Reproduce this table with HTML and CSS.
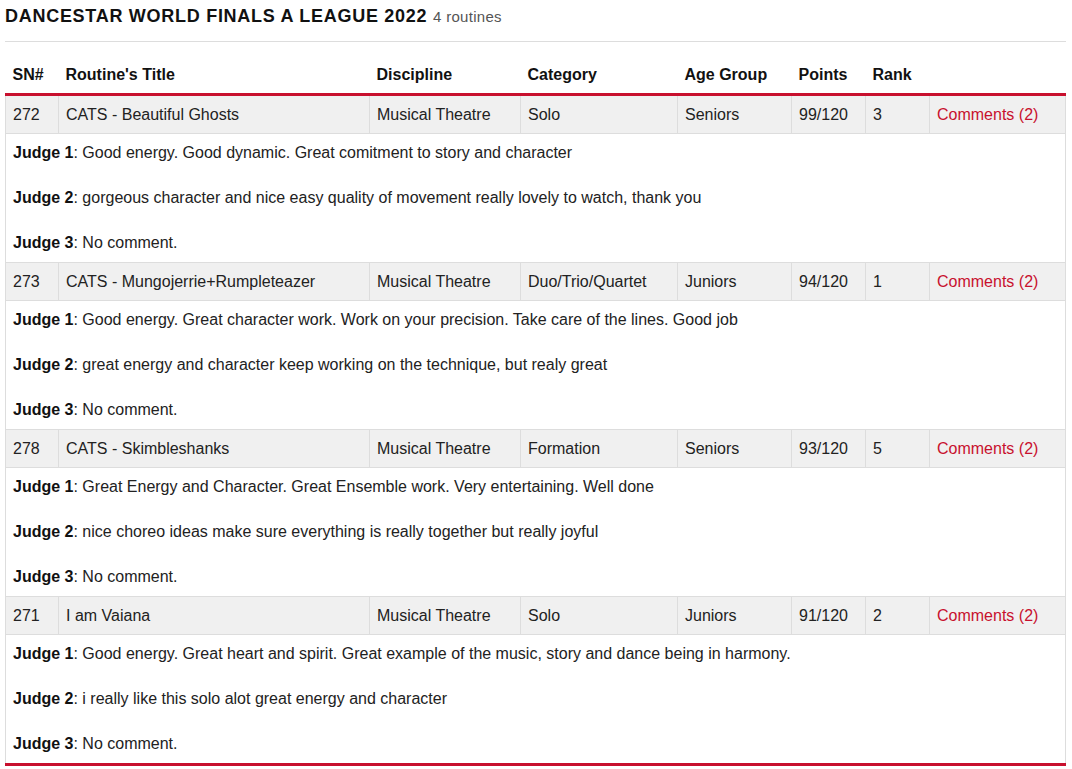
FILE: index.html
```html
<!DOCTYPE html>
<html>
<head>
<meta charset="utf-8">
<link rel="stylesheet" href="styles.css">
</head>
<body>
<div class="page">
  <h1 class="title">DANCESTAR WORLD FINALS A LEAGUE 2022 <small class="count">4 routines</small></h1>
  <hr class="rule">
  <table class="results">
    <colgroup>
      <col class="c-sn"><col class="c-title"><col class="c-disc"><col class="c-cat"><col class="c-age"><col class="c-pts"><col class="c-rank"><col class="c-com">
    </colgroup>
    <thead>
      <tr><th>SN#</th><th>Routine's Title</th><th>Discipline</th><th>Category</th><th>Age Group</th><th>Points</th><th>Rank</th><th></th></tr>
    </thead>
    <tbody>
      <tr class="main"><td>272</td><td>CATS - Beautiful Ghosts</td><td>Musical Theatre</td><td>Solo</td><td>Seniors</td><td>99/120</td><td>3</td><td><a class="link" href="#">Comments (2)</a></td></tr>
      <tr class="comments"><td colspan="8"><b>Judge 1</b>: Good energy. Good dynamic. Great comitment to story and character<br><br><b>Judge 2</b>: gorgeous character and nice easy quality of movement really lovely to watch, thank you<br><br><b>Judge 3</b>: No comment.</td></tr>
      <tr class="main"><td>273</td><td>CATS - Mungojerrie+Rumpleteazer</td><td>Musical Theatre</td><td>Duo/Trio/Quartet</td><td>Juniors</td><td>94/120</td><td>1</td><td><a class="link" href="#">Comments (2)</a></td></tr>
      <tr class="comments"><td colspan="8"><b>Judge 1</b>: Good energy. Great character work. Work on your precision. Take care of the lines. Good job<br><br><b>Judge 2</b>: great energy and character keep working on the technique, but realy great<br><br><b>Judge 3</b>: No comment.</td></tr>
      <tr class="main"><td>278</td><td>CATS - Skimbleshanks</td><td>Musical Theatre</td><td>Formation</td><td>Seniors</td><td>93/120</td><td>5</td><td><a class="link" href="#">Comments (2)</a></td></tr>
      <tr class="comments"><td colspan="8"><b>Judge 1</b>: Great Energy and Character. Great Ensemble work. Very entertaining. Well done<br><br><b>Judge 2</b>: nice choreo ideas make sure everything is really together but really joyful<br><br><b>Judge 3</b>: No comment.</td></tr>
      <tr class="main"><td>271</td><td>I am Vaiana</td><td>Musical Theatre</td><td>Solo</td><td>Juniors</td><td>91/120</td><td>2</td><td><a class="link" href="#">Comments (2)</a></td></tr>
      <tr class="comments last"><td colspan="8"><b>Judge 1</b>: Good energy. Great heart and spirit. Great example of the music, story and dance being in harmony.<br><br><b>Judge 2</b>: i really like this solo alot great energy and character<br><br><b>Judge 3</b>: No comment.</td></tr>
    </tbody>
  </table>
</div>
</body>
</html>
```
FILE: styles.css
```css
html, body {
  margin: 0;
  padding: 0;
  background: #fff;
}
body {
  font-family: "Liberation Sans", Arial, sans-serif;
  color: #222;
  font-size: 16px;
}
.page {
  padding: 0 6px 0 5px;
}
.title {
  margin: 0;
  padding-top: 5px;
  font-size: 18px;
  line-height: 22px;
  font-weight: bold;
  letter-spacing: 0.72px;
  color: #111;
}
.count {
  font-size: 15px;
  font-weight: normal;
  letter-spacing: 0.3px;
  color: #555;
}
.rule {
  margin: 13px 0 0;
  border: 0;
  border-top: 1px solid #ddd;
  height: 0;
}
.results {
  margin-top: 14px;
  width: 100%;
  border-collapse: collapse;
  table-layout: fixed;
}
.c-sn { width: 53px; }
.c-title { width: 311px; }
.c-disc { width: 151px; }
.c-cat { width: 157px; }
.c-age { width: 114px; }
.c-pts { width: 74px; }
.c-rank { width: 64px; }
.c-com { width: 136px; }
.results th {
  text-align: left;
  padding: 8px 8px 8px 7px;
  line-height: 21px;
  font-weight: bold;
  color: #111;
  border-bottom: 3px solid #c8102e;
}
.results td {
  padding: 8px 8px 8px 7px;
  line-height: 21px;
  border: 1px solid #ddd;
  vertical-align: top;
}
.main td {
  background: #f0f0f0;
}
.comments td {
  line-height: 22.4px;
  background: #fff;
}
.comments b {
  color: #111;
}
.last td {
  border-bottom: 3px solid #c8102e;
}
.link {
  color: #c8102e;
  text-decoration: none;
}
```
